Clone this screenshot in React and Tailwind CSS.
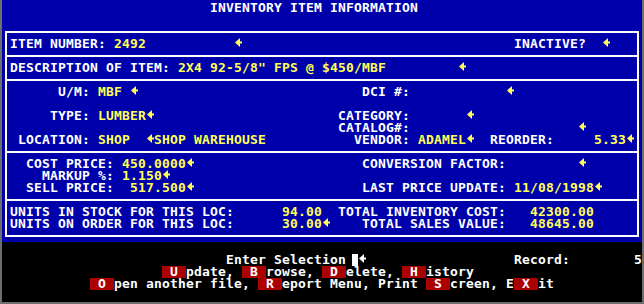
const TONE = {
  w: 'text-white',
  y: 'text-[#ffff55]',
  hl: 'bg-[#aa0000] text-white',
};

const FILL = { w: '#ffffff', y: '#ffff55', hl: '#ffffff' };

const CURSOR = '__cursor__';

const Arrow = ({ fill }) => (
  <svg width="8" height="12" viewBox="0 0 8 12" className="block shrink-0" fill={fill}>
    <polygon points="1,4.5 6,0 6,9" />
    <rect x="5.5" y="3.5" width="2.5" height="2" />
  </svg>
);

const Cursor = () => (
  <span className="flex w-6 shrink-0 pl-[6px]">
    <span className="h-3 w-[6px] bg-white" />
    <Arrow fill="#ffffff" />
  </span>
);

// one text-mode line, items are [column, text, tone]
const Row = ({ items = [], start = 0 }) => {
  let col = start;
  const out = [];

  items.forEach(([at, text, tone], i) => {
    if (at > col) out.push(<span key={`p${i}`}>{' '.repeat(at - col)}</span>);

    if (text === CURSOR) {
      out.push(<Cursor key={`c${i}`} />);
      col = at + 3;
      return;
    }

    text.split('◄').forEach((part, j) => {
      if (j > 0) out.push(<Arrow key={`${i}a${j}`} fill={FILL[tone]} />);
      if (part) {
        out.push(
          <span key={`${i}t${j}`} className={TONE[tone]}>
            {part}
          </span>
        );
      }
    });
    col = at + text.length;
  });

  return <div className="flex h-3 leading-3 whitespace-pre">{out}</div>;
};

const Separator = () => (
  <div className="h-3 pt-[5px]">
    <div className="h-[2px] bg-white" />
  </div>
);

const App = () => {
  return (
    <div className="h-[304px] w-[644px] border-x-2 border-b-2 border-[#6e6e6e] bg-[#0000aa] pt-[2px] font-['DejaVu_Sans_Mono',monospace] text-[13px] font-bold tracking-[0.1733px]">
      {/* form area */}
      <div className="bg-[#0000aa] pb-[5px]">
        <Row items={[[26, 'INVENTORY ITEM INFORMATION', 'w']]} />
        <Row />

        <div className="mx-[3px] mt-[5px] border-2 border-white py-[5px]">
          <div className="pl-[3px]">
            <Row
              start={1}
              items={[
                [1, 'ITEM NUMBER:', 'w'],
                [14, '2492', 'y'],
                [29, '◄', 'y'],
                [64, 'INACTIVE?', 'w'],
                [75, '◄', 'y'],
              ]}
            />
          </div>
          <Separator />
          <div className="pl-[3px]">
            <Row
              start={1}
              items={[
                [1, 'DESCRIPTION OF ITEM:', 'w'],
                [22, '2X4 92-5/8" FPS @ $450/MBF', 'y'],
                [57, '◄', 'y'],
              ]}
            />
          </div>
          <Separator />
          <div className="pl-[3px]">
            <Row
              start={1}
              items={[
                [7, 'U/M:', 'w'],
                [12, 'MBF', 'y'],
                [16, '◄', 'y'],
                [45, 'DCI #:', 'w'],
                [63, '◄', 'y'],
              ]}
            />
            <Row start={1} />
            <Row
              start={1}
              items={[
                [6, 'TYPE:', 'w'],
                [12, 'LUMBER◄', 'y'],
                [42, 'CATEGORY:', 'w'],
                [58, '◄', 'y'],
              ]}
            />
            <Row
              start={1}
              items={[
                [42, 'CATALOG#:', 'w'],
                [72, '◄', 'y'],
              ]}
            />
            <Row
              start={1}
              items={[
                [2, 'LOCATION:', 'w'],
                [12, 'SHOP', 'y'],
                [18, '◄SHOP WAREHOUSE', 'y'],
                [44, 'VENDOR:', 'w'],
                [52, 'ADAMEL◄', 'y'],
                [61, 'REORDER:', 'w'],
                [74, '5.33◄', 'y'],
              ]}
            />
          </div>
          <Separator />
          <div className="pl-[3px]">
            <Row
              start={1}
              items={[
                [3, 'COST PRICE:', 'w'],
                [15, '450.0000◄', 'y'],
                [45, 'CONVERSION FACTOR:', 'w'],
                [72, '◄', 'y'],
              ]}
            />
            <Row
              start={1}
              items={[
                [5, 'MARKUP %:', 'w'],
                [15, '1.150◄', 'y'],
              ]}
            />
            <Row
              start={1}
              items={[
                [3, 'SELL PRICE:', 'w'],
                [16, '517.500◄', 'y'],
                [45, 'LAST PRICE UPDATE:', 'w'],
                [64, '11/08/1998◄', 'y'],
              ]}
            />
          </div>
          <Separator />
          <div className="pl-[3px]">
            <Row
              start={1}
              items={[
                [1, 'UNITS IN STOCK FOR THIS LOC:', 'w'],
                [35, '94.00', 'y'],
                [42, 'TOTAL INVENTORY COST:', 'w'],
                [66, '42300.00', 'y'],
              ]}
            />
            <Row
              start={1}
              items={[
                [1, 'UNITS ON ORDER FOR THIS LOC:', 'w'],
                [35, '30.00◄', 'y'],
                [45, 'TOTAL SALES VALUE:', 'w'],
                [66, '48645.00', 'y'],
              ]}
            />
          </div>
        </div>
      </div>

      {/* command area */}
      <div className="h-[60px] bg-black">
        <Row />
        <Row
          items={[
            [28, 'Enter Selection', 'w'],
            [43, CURSOR, 'w'],
            [64, 'Record:', 'w'],
            [79, '5', 'w'],
          ]}
        />
        <Row
          items={[
            [20, ' U ', 'hl'],
            [23, 'pdate,', 'w'],
            [30, ' B ', 'hl'],
            [33, 'rowse,', 'w'],
            [40, ' D ', 'hl'],
            [43, 'elete,', 'w'],
            [50, ' H ', 'hl'],
            [53, 'istory', 'w'],
          ]}
        />
        <Row
          items={[
            [11, ' O ', 'hl'],
            [14, 'pen another file,', 'w'],
            [32, ' R ', 'hl'],
            [35, 'eport Menu, Print', 'w'],
            [53, ' S ', 'hl'],
            [56, 'creen, E', 'w'],
            [64, ' X ', 'hl'],
            [67, 'it', 'w'],
          ]}
        />
      </div>
    </div>
  );
};

export default App;
